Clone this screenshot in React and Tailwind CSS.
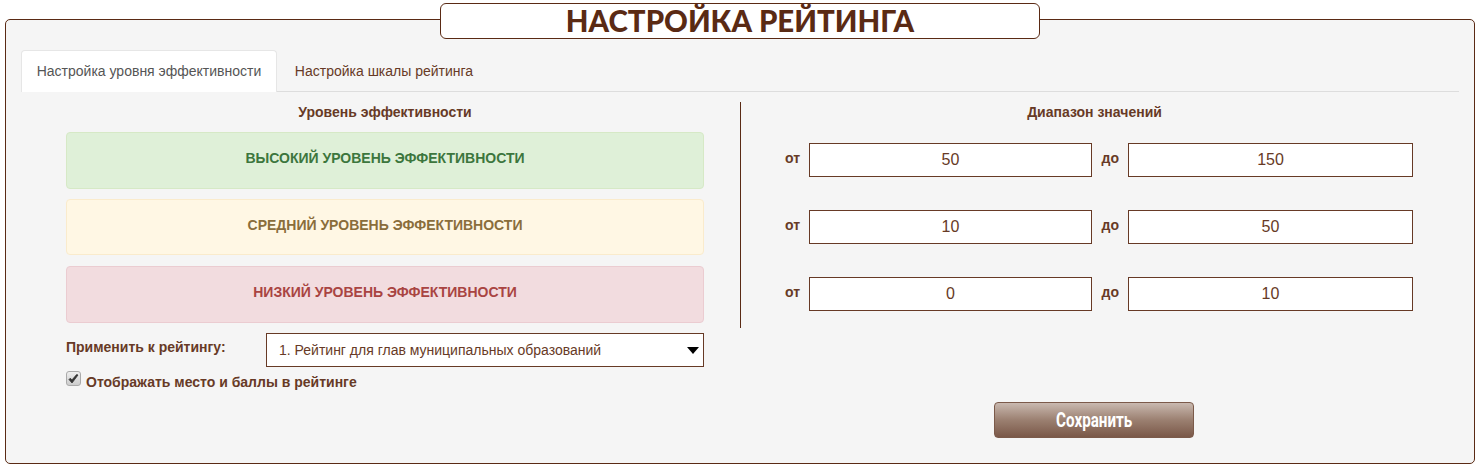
import React from 'react';

const levels = [
  { label: 'ВЫСОКИЙ УРОВЕНЬ ЭФФЕКТИВНОСТИ', box: 'h-[57px] mt-[10px] bg-[#dff0d8] border-[#d6e9c6] text-[#3c763d]' },
  { label: 'СРЕДНИЙ УРОВЕНЬ ЭФФЕКТИВНОСТИ', box: 'h-[56px] mt-[10px] bg-[#fff7e4] border-[#faebcc] text-[#8a6d3b]' },
  { label: 'НИЗКИЙ УРОВЕНЬ ЭФФЕКТИВНОСТИ', box: 'h-[57px] mt-[11px] bg-[#f2dcdf] border-[#ebccd1] text-[#a94442]' },
];

const ranges = [
  { from: '50', to: '150' },
  { from: '10', to: '50' },
  { from: '0', to: '10' },
];

const App = () => {
  return (
    <div className="w-[1480px] h-[468px] bg-white px-[5px] pt-[19px] font-['Liberation_Sans',Arial,sans-serif] text-[#673a26]">
      <div className="relative w-[1470px] h-[445px] bg-[#f5f5f5] border border-[#5a2a14] rounded-[5px] px-[15px] pt-[30px]">
        {/* Title */}
        <div className="absolute left-[434px] top-[-17px] w-[600px] h-[36px] bg-white border border-[#5a2a14] rounded-[6px] flex items-center justify-center">
          <h1 className="font-['Lato',sans-serif] font-black text-[29.4px] leading-none text-[#5a2a14]">НАСТРОЙКА РЕЙТИНГА</h1>
        </div>

        {/* Tabs */}
        <div className="flex h-[42px] border-b border-[#dddddd] text-[14px]">
          <div className="w-[256px] h-[42px] bg-white border border-[#e6e6e6] border-b-0 rounded-t-[4px] flex items-center justify-center text-[#555555]">
            Настройка уровня эффективности
          </div>
          <div className="w-[214px] h-[42px] flex items-center justify-center">Настройка шкалы рейтинга</div>
        </div>

        <div className="flex">
          {/* Left column */}
          <div className="w-[720px] pt-[10px]">
            <div className="h-[226px] border-r border-[#5a2a14] pl-[45px] pr-[36px]">
              <div className="h-[20px] flex items-center justify-center font-bold text-[14px]">Уровень эффективности</div>
              {levels.map((level) => (
                <div
                  key={level.label}
                  className={`${level.box} border rounded-[4px] flex items-center justify-center pb-[4px] font-bold text-[14px]`}
                >
                  {level.label}
                </div>
              ))}
            </div>

            <div className="pl-[45px] pr-[37px] mt-[5px]">
              <div className="flex items-start justify-between">
                <label className="font-bold text-[14px] leading-[28px]">Применить к рейтингу:</label>
                <div className="relative w-[438px] h-[34px]">
                  <select className="w-full h-full appearance-none bg-white border border-[#673a26] pl-[12px] text-[14px] outline-none">
                    <option>1. Рейтинг для глав муниципальных образований</option>
                  </select>
                  <svg className="absolute right-[5px] top-[14px] pointer-events-none" width="12" height="7" viewBox="0 0 12 7">
                    <path d="M0 0h12L6 7z" fill="#000000" />
                  </svg>
                </div>
              </div>
              <label className="flex items-start mt-[4px] font-bold text-[14px] leading-[22px]">
                <span className="w-[15px] h-[15px] mr-[5px] rounded-[3px] border border-[#aaaaaa] bg-gradient-to-b from-[#eeeeee] to-[#cccccc] flex items-center justify-center">
                  <svg width="11" height="10" viewBox="0 0 11 10">
                    <path d="M1 5.5 L4 9 L10 1 L8.6 0.6 L3.9 6 L2.3 4.2z" fill="#333333" stroke="#333333" strokeWidth="0.8" />
                  </svg>
                </span>
                Отображать место и баллы в рейтинге
              </label>
            </div>
          </div>

          {/* Right column */}
          <div className="w-[706px] pl-[44px] pt-[10px]">
            <div className="w-[619px] h-[20px] flex items-center justify-center font-bold text-[14px]">Диапазон значений</div>
            <div className="mt-[21px] flex flex-col gap-[33px]">
              {ranges.map((range) => (
                <div key={range.from} className="flex items-center h-[34px] font-bold text-[14px]">
                  <span className="w-[24px] -mt-[3px]">от</span>
                  <input
                    readOnly
                    value={range.from}
                    className="w-[283px] h-[34px] bg-white border border-[#673a26] text-center font-normal text-[16px] outline-none"
                  />
                  <span className="w-[36px] pl-[9.5px] -mt-[3px]">до</span>
                  <input
                    readOnly
                    value={range.to}
                    className="w-[285px] h-[34px] bg-white border border-[#673a26] text-center font-normal text-[16px] outline-none"
                  />
                </div>
              ))}
            </div>
            <div className="w-[618px] flex justify-center mt-[91px]">
              <button className="w-[200px] h-[36px] rounded-[4px] border border-[#7b5a4a] bg-gradient-to-b from-[#c9b9b0] via-[#9b8071] to-[#7a5848] text-white font-['Roboto',sans-serif] font-bold text-[20px]">
                <span className="inline-block scale-x-[0.76]">Сохранить</span>
              </button>
            </div>
          </div>
        </div>
      </div>
    </div>
  );
};

export default App;
